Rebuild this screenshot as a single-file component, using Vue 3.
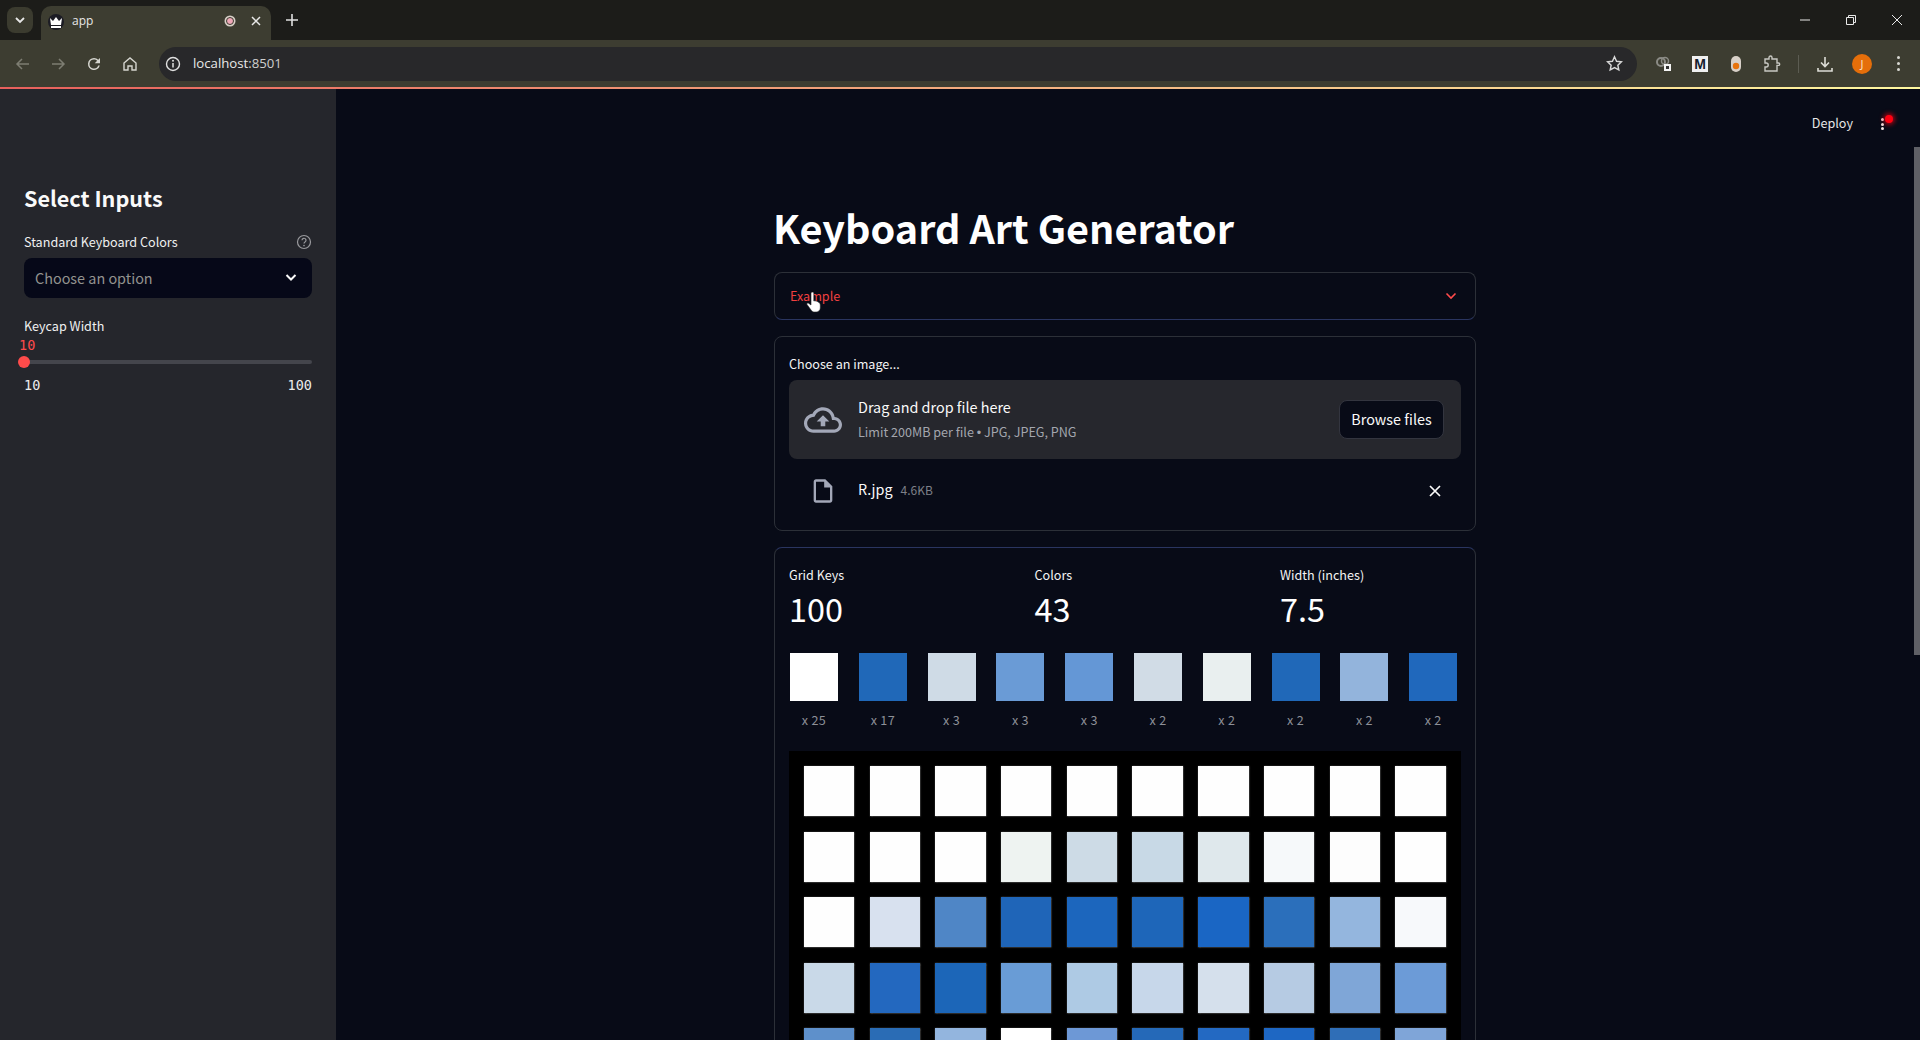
<template>
  <div class="page">
    <!-- browser window -->
    <div class="tabstrip">
      <div class="tab-menu">
        <svg width="14" height="14" viewBox="0 0 14 14"><path d="M3 5l4 4 4-4" fill="none" stroke="#e8e8e8" stroke-width="1.8" /></svg>
      </div>
      <div class="tab">
        <span class="favicon">
          <svg width="14" height="11" viewBox="0 0 14 11"><path d="M1 1l3 3 3-4 3 4 3-3-1 7H2zM2 9h10v2H2z" fill="#fff" /></svg>
        </span>
        <span class="tab-title">app</span>
        <span class="rec"></span>
        <svg class="tab-close" width="12" height="12" viewBox="0 0 12 12"><path d="M2 2l8 8M10 2l-8 8" stroke="#e8e8e8" stroke-width="1.5" /></svg>
      </div>
      <svg class="new-tab" width="14" height="14" viewBox="0 0 14 14"><path d="M7 1v12M1 7h12" stroke="#e0e0e0" stroke-width="1.6" /></svg>
      <div class="win-btns">
        <svg width="12" height="12" viewBox="0 0 12 12"><path d="M1 6h10" stroke="#e8e8e8" /></svg>
        <svg width="12" height="12" viewBox="0 0 12 12"><path d="M1.5 3.5h7v7h-7zM3.5 3.5v-2h7v7h-2" fill="none" stroke="#e8e8e8" /></svg>
        <svg width="12" height="12" viewBox="0 0 12 12"><path d="M1 1l10 10M11 1L1 11" stroke="#e8e8e8" /></svg>
      </div>
    </div>
    <div class="toolbar">
      <div class="nav-btns">
        <svg width="16" height="16" viewBox="0 0 16 16"><path d="M14 8H2M7 3L2 8l5 5" fill="none" stroke="#7d7d72" stroke-width="1.5" /></svg>
        <svg width="16" height="16" viewBox="0 0 16 16"><path d="M2 8h12M9 3l5 5-5 5" fill="none" stroke="#7d7d72" stroke-width="1.5" /></svg>
        <svg width="18" height="18" viewBox="0 0 24 24"><path d="M17.65 6.35A7.95 7.95 0 0 0 12 4a8 8 0 1 0 7.73 10h-2.08A6 6 0 1 1 12 6c1.66 0 3.14.69 4.22 1.78L13 11h7V4l-2.35 2.35z" fill="#d6d6d0" /></svg>
        <svg width="16" height="16" viewBox="0 0 16 16"><path d="M2 7l6-5 6 5v7h-4v-4H6v4H2z" fill="none" stroke="#d6d6d0" stroke-width="1.4" /></svg>
      </div>
      <div class="address">
        <svg width="16" height="16" viewBox="0 0 16 16"><circle cx="8" cy="8" r="6.5" fill="none" stroke="#e0e0e0" stroke-width="1.4" /><path d="M8 7v4.5" stroke="#e0e0e0" stroke-width="1.5" /><circle cx="8" cy="4.8" r="1" fill="#e0e0e0" /></svg>
        <span class="url">localhost<span class="url-port">:8501</span></span>
        <svg class="star" width="17" height="17" viewBox="0 0 24 24"><path d="M12 2.5l2.9 6.3 6.9.8-5.1 4.7 1.4 6.8-6.1-3.4-6.1 3.4 1.4-6.8-5.1-4.7 6.9-.8z" fill="none" stroke="#d8d8d8" stroke-width="2" /></svg>
      </div>
      <div class="ext-btns">
        <span class="ext">
          <svg width="18" height="18" viewBox="0 0 18 18"><circle cx="6" cy="7" r="4" fill="none" stroke="#8b8b85" stroke-width="2" /><circle cx="10" cy="6" r="3.5" fill="none" stroke="#8b8b85" stroke-width="1.5" /><rect x="9" y="9" width="7" height="7" fill="#f4f4f4" /><rect x="11" y="11" width="3" height="3" fill="#333" /></svg>
        </span>
        <span class="ext ext-m">M</span>
        <span class="ext">
          <svg width="14" height="18" viewBox="0 0 14 18"><rect x="2" y="1" width="10" height="16" rx="5" fill="#d8d0c8" /><circle cx="7" cy="11" r="3.2" fill="#e8730c" /></svg>
        </span>
        <span class="ext">
          <svg width="18" height="18" viewBox="0 0 18 18"><path d="M2 4h4V2.5a1.5 1.5 0 0 1 3 0V4h5v4h1.5a1.2 1.2 0 0 1 0 2.4H14V16H2v-4h1.2a2 2 0 0 0 0-4H2z" fill="none" stroke="#c8c8c2" stroke-width="1.4" /></svg>
        </span>
        <span class="sep"></span>
        <span class="ext">
          <svg width="18" height="18" viewBox="0 0 18 18"><path d="M9 2v9M5 7.5l4 4 4-4M2 13v3h14v-3" fill="none" stroke="#dcdcd6" stroke-width="1.6" /></svg>
        </span>
        <span class="avatar">J</span>
        <span class="dots"><i></i><i></i><i></i></span>
      </div>
    </div>
    <div class="deco-line"></div>

    <!-- streamlit app -->
    <div class="app">
      <aside class="sidebar">
        <h2>Select Inputs</h2>
        <div class="field-label">
          <span>Standard Keyboard Colors</span>
          <svg width="16" height="16" viewBox="0 0 16 16"><circle cx="8" cy="8" r="6.5" fill="none" stroke="#9a9a9e" stroke-width="1.2" /><path d="M6 6.3a2 2 0 1 1 3 1.7c-.7.4-1 .8-1 1.6" fill="none" stroke="#9a9a9e" stroke-width="1.2" /><circle cx="8" cy="11.6" r=".8" fill="#9a9a9e" /></svg>
        </div>
        <div class="select">
          <span>Choose an option</span>
          <svg width="14" height="14" viewBox="0 0 14 14"><path d="M2.5 5l4.5 4.5L11.5 5" fill="none" stroke="#fafafa" stroke-width="2" /></svg>
        </div>
        <div class="field-label slider-label">Keycap Width</div>
        <div class="slider-value">10</div>
        <div class="slider-track"><span class="slider-thumb"></span></div>
        <div class="slider-ticks"><span>10</span><span>100</span></div>
      </aside>

      <main class="main">
        <div class="topbar">
          <span>Deploy</span>
          <span class="menu-dots"><i></i><i></i><i></i></span>
          <span class="rec-dot"></span>
        </div>

        <div class="content">
          <h1>Keyboard Art Generator</h1>

          <div class="expander">
            <span class="expander-title">Example</span>
            <svg width="14" height="14" viewBox="0 0 14 14"><path d="M2.5 4.5L7 9l4.5-4.5" fill="none" stroke="#ff4b4b" stroke-width="1.6" /></svg>
            <svg class="hand" width="16" height="22" viewBox="0 0 16 22"><path d="M5 1.5a1.4 1.4 0 0 1 2.8 0V9l1-.2 1.5.3 1.5.6 1.5 1c.7.6 1 1.3 1 2.3v3c0 2.2-1.8 4-4 4H8.5c-1.5 0-2.5-.7-3.3-1.8L1 12.5c-.6-.9.5-2 1.500-1.300L5 13z" fill="#fff" stroke="#222" stroke-width=".6" /></svg>
          </div>

          <section class="box upload-box">
            <div class="box-label">Choose an image...</div>
            <div class="dropzone">
              <svg class="cloud" width="38" height="38" viewBox="0 0 24 24"><path d="M19.35 10.04C18.67 6.59 15.64 4 12 4 9.11 4 6.6 5.64 5.35 8.04 2.34 8.36 0 10.91 0 14c0 3.31 2.69 6 6 6h13c2.76 0 5-2.24 5-5 0-2.64-2.05-4.78-4.65-4.96zM19 18H6c-2.21 0-4-1.79-4-4 0-2.05 1.53-3.76 3.56-3.97l1.07-.11.5-.95C8.08 7.14 9.94 6 12 6c2.62 0 4.88 1.86 5.39 4.43l.3 1.5 1.53.11c1.56.1 2.78 1.41 2.78 2.96 0 1.65-1.35 3-3 3zM8 13h2.55v3h2.9v-3H16l-4-4z" fill="#a3a8b8" /></svg>
              <div class="drop-text">
                <div class="drop-title">Drag and drop file here</div>
                <div class="drop-limit">Limit 200MB per file <span class="bullet">•</span> JPG, JPEG, PNG</div>
              </div>
              <button type="button" class="browse">Browse files</button>
            </div>
            <div class="file-row">
              <svg class="file-icon" width="28" height="28" viewBox="0 0 24 24"><path d="M14 2H6c-1.1 0-1.99.9-1.99 2L4 20c0 1.1.89 2 1.99 2H18c1.1 0 2-.9 2-2V8l-6-6zM6 20V4h7v5h5v11H6z" fill="#a3a8b8" /></svg>
              <span class="file-name">R.jpg</span>
              <span class="file-size">4.6KB</span>
              <svg class="file-x" width="14" height="14" viewBox="0 0 14 14"><path d="M2 2l10 10M12 2L2 12" stroke="#fafafa" stroke-width="1.7" /></svg>
            </div>
          </section>

          <section class="box result-box">
            <div class="metrics">
              <div v-for="m in metrics" :key="m.label">
                <div class="box-label">{{ m.label }}</div>
                <div class="metric-value">{{ m.value }}</div>
              </div>
            </div>

            <div class="swatches">
              <div v-for="(s, i) in swatches" :key="i" class="swatch">
                <div class="swatch-color" :style="{ background: s.color }"></div>
                <div class="swatch-count">x {{ s.count }}</div>
              </div>
            </div>

            <div class="keyboard">
              <div v-for="(c, i) in keys" :key="i" class="key" :style="{ background: c }"></div>
            </div>
          </section>
        </div>
      </main>
      <div class="scrollbar"></div>
    </div>
  </div>
</template>

<script setup>
const metrics = [
  { label: 'Grid Keys', value: '100' },
  { label: 'Colors', value: '43' },
  { label: 'Width (inches)', value: '7.5' },
];

const swatches = [
  { color: '#ffffff', count: 25 },
  { color: '#2068b8', count: 17 },
  { color: '#cfdbe6', count: 3 },
  { color: '#6a9bd6', count: 3 },
  { color: '#6497d6', count: 3 },
  { color: '#d1dce6', count: 2 },
  { color: '#e9efef', count: 2 },
  { color: '#2068b8', count: 2 },
  { color: '#93b4dc', count: 2 },
  { color: '#2068bc', count: 2 },
];

// keycap colours, row by row
const keys = [
  '#fefefe', '#fefefe', '#fefefe', '#fefefe', '#fefefe', '#fefefe', '#fefefe', '#fefefe', '#fefefe', '#fefefe',
  '#fefefe', '#fefefe', '#fefefe', '#eef3f1', '#cddbe6', '#c8d9e6', '#dfe8ec', '#f6f9fa', '#fdfdfd', '#fefefe',
  '#fefefe', '#d8e1ef', '#4f86c6', '#1f65b8', '#1c66bd', '#1e66b9', '#1a66c4', '#2b6fbb', '#94b6de', '#f7f9fb',
  '#c9d9e8', '#2368bf', '#1c66b8', '#699cd6', '#aecae4', '#c7d7ea', '#d5e0ec', '#b6cbe3', '#7fa6d7', '#6c9bd7',
  '#5e90cb', '#2a6cb5', '#93b5de', '#ffffff', '#6d98d6', '#2569b8', '#2369c2', '#1e67c3', '#2f6eb7', '#7fa5d8',
];
</script>

<style>
html, body {
  margin: 0;
  background: #080b17;
}
</style>

<style scoped>
.page {
  width: 1920px;
  height: 1040px;
  overflow: hidden;
  display: flex;
  flex-direction: column;
  font-family: "Noto Sans CJK SC", "Noto Sans", sans-serif;
  color: #fafafa;
}

/* browser */
.tabstrip {
  height: 40px;
  flex: none;
  display: flex;
  align-items: flex-end;
  background: #1c1c19;
}
.tab-menu {
  width: 26px;
  height: 26px;
  margin: 0 7px 7px 7px;
  border-radius: 8px;
  background: #3b3b2f;
  display: flex;
  align-items: center;
  justify-content: center;
}
.tab {
  width: 230px;
  height: 34px;
  margin-left: 1px;
  padding: 0 9px 0 7px;
  box-sizing: border-box;
  border-radius: 10px 10px 0 0;
  background: #3d3d31;
  display: flex;
  align-items: center;
  font-family: "Open Sans", sans-serif;
  font-size: 12px;
}
.favicon {
  width: 16px;
  height: 16px;
  border-radius: 50%;
  background: #1c1c24;
  display: flex;
  align-items: center;
  justify-content: center;
  position: relative;
  top: -1px;
}
.tab-title {
  margin-left: 8px;
  color: #e8e8e8;
  position: relative;
  top: -3px;
}
.rec {
  width: 6px;
  height: 6px;
  margin-left: auto;
  margin-right: 16px;
  position: relative;
  top: -2px;
  border-radius: 50%;
  background: #f0a8b8;
  border: 1.5px solid #3d3d31;
  box-shadow: 0 0 0 1.5px #d8d0c8;
}
.tab-close {
  position: relative;
  top: -2px;
}
.new-tab {
  align-self: center;
  margin-left: 14px;
}
.win-btns {
  margin-left: auto;
  align-self: center;
  display: flex;
  gap: 34px;
  padding-right: 17px;
}
.toolbar {
  height: 47px;
  flex: none;
  display: flex;
  align-items: center;
  background: #3d3d31;
}
.nav-btns {
  width: 159px;
  padding-left: 15px;
  box-sizing: border-box;
  display: flex;
  align-items: center;
  gap: 19px;
  flex: none;
}
.address {
  width: 1478px;
  height: 34px;
  flex: none;
  border-radius: 17px;
  background: #28282a;
  display: flex;
  align-items: center;
  padding: 0 14px 0 6px;
  box-sizing: border-box;
}
.url {
  margin-left: 12px;
  font-family: "Open Sans", sans-serif;
  font-size: 13.2px;
  line-height: 18px;
  position: relative;
  top: -1px;
  color: #e8e8e8;
}
.url-port {
  color: #cfcfcf;
}
.star {
  margin-left: auto;
}
.ext-btns {
  display: flex;
  align-items: center;
  padding-left: 9px;
}
.ext {
  width: 36px;
  display: flex;
  justify-content: center;
}
.ext-m {
  width: 16px;
  height: 16px;
  margin: 0 10px;
  justify-content: center;
  align-items: center;
  background: #f0f0f0;
  color: #14202e;
  font-family: "Liberation Sans", sans-serif;
  font-weight: 700;
  font-size: 14px;
  line-height: 16px;
}
.sep {
  width: 1px;
  height: 18px;
  margin: 0 8px;
  background: #5c5c52;
}
.avatar {
  width: 20px;
  height: 20px;
  margin-left: 9px;
  border-radius: 50%;
  background: #e56e0a;
  color: #fbe3c8;
  font-family: "Open Sans", sans-serif;
  font-size: 11px;
  line-height: 20px;
  text-align: center;
}
.dots {
  display: flex;
  flex-direction: column;
  gap: 3px;
  margin-left: 25px;
}
.dots i {
  width: 3px;
  height: 3px;
  border-radius: 50%;
  background: #d8d8d2;
}
.deco-line {
  height: 2px;
  flex: none;
  background: linear-gradient(90deg, #e8605c, #fff8a0);
}

/* app */
.app {
  flex: 1;
  min-height: 0;
  display: flex;
  position: relative;
  background: #080b17;
}
.sidebar {
  width: 336px;
  flex: none;
  box-sizing: border-box;
  padding: 93px 24px 0;
  background: #25262c;
}
.sidebar h2 {
  margin: 0 0 18px;
  font-size: 21.6px;
  line-height: 32px;
  font-weight: 600;
}
.field-label {
  display: flex;
  justify-content: space-between;
  align-items: center;
  height: 20px;
  font-size: 12.6px;
  line-height: 20px;
  color: #f0f0f0;
}
.select {
  height: 40px;
  margin-top: 6px;
  padding: 0 14px 2px 11px;
  box-sizing: border-box;
  border-radius: 8px;
  background: #060818;
  display: flex;
  align-items: center;
  justify-content: space-between;
  font-size: 14.4px;
  color: #93938f;
}
.slider-label {
  margin-top: 18px;
}
.slider-value {
  margin: -1px 0 0 -5px;
  height: 20px;
  font-family: "DejaVu Sans Mono", monospace;
  font-size: 13.5px;
  line-height: 20px;
  color: #ff4b4b;
}
.slider-track {
  position: relative;
  height: 4px;
  margin-top: 5px;
  border-radius: 2px;
  background: #44454c;
}
.slider-thumb {
  position: absolute;
  left: -6px;
  top: -4px;
  width: 12px;
  height: 12px;
  border-radius: 50%;
  background: #ff4b4b;
}
.slider-ticks {
  display: flex;
  justify-content: space-between;
  margin-top: 11px;
  font-family: "DejaVu Sans Mono", monospace;
  font-size: 13.5px;
  line-height: 20px;
  color: #ececec;
}

.main {
  flex: 1;
  position: relative;
  min-width: 0;
  padding-right: 6px;
}
.topbar {
  position: absolute;
  top: 24px;
  right: 36px;
  display: flex;
  align-items: center;
  gap: 28px;
  font-size: 12.6px;
  line-height: 20px;
  color: #e6e6e6;
}
.menu-dots {
  display: flex;
  flex-direction: column;
  gap: 1.5px;
  position: relative;
  top: 1px;
}
.menu-dots i {
  width: 3px;
  height: 3px;
  border-radius: 50%;
  background: #f0e0e0;
}
.rec-dot {
  position: absolute;
  right: -9px;
  top: 2px;
  width: 8px;
  height: 8px;
  border-radius: 50%;
  background: #ff0010;
  box-shadow: 0 0 4px 2px rgba(255, 0, 16, 0.6);
}
.content {
  width: 702px;
  margin: 0 auto;
  padding-top: 112px;
}
h1 {
  margin: 0 0 19px -1px;
  font-size: 39.6px;
  line-height: 52px;
  font-weight: 700;
  color: #fff;
}
.expander {
  position: relative;
  height: 48px;
  box-sizing: border-box;
  padding: 0 17px 0 15px;
  border: 1px solid #2c3038;
  border-bottom-color: #2a3560;
  border-radius: 8px;
  display: flex;
  align-items: center;
  justify-content: space-between;
  font-size: 12.6px;
  color: #f04040;
}
.expander-title {
  position: relative;
  top: -1px;
}
.hand {
  position: absolute;
  left: 31px;
  top: 19px;
}
.box {
  margin-top: 16px;
  padding: 17px 14px 0;
  border: 1px solid #2c3038;
  border-radius: 8px;
}
.upload-box {
  height: 195px;
  box-sizing: border-box;
}
.box-label {
  font-size: 12.6px;
  line-height: 19px;
  padding-bottom: 1px;
  color: #f4f4f4;
}
.dropzone {
  height: 79px;
  margin-top: 6px;
  padding: 0 17px 0 15px;
  border-radius: 8px;
  background: #26272d;
  display: flex;
  align-items: center;
}
.cloud {
  flex: none;
}
.drop-text {
  margin-left: 16px;
}
.drop-title {
  font-size: 14.4px;
  line-height: 23px;
  position: relative;
  top: -1px;
}
.drop-limit {
  margin-top: 3px;
  font-size: 12.6px;
  line-height: 20px;
  color: #a3a6ae;
}
.bullet {
  font-family: "Liberation Sans", sans-serif;
}
.browse {
  margin-left: auto;
  width: 105px;
  height: 39px;
  padding: 0 0 2px;
  border: 1px solid #33353f;
  border-radius: 8px;
  background: #080b17;
  color: #fafafa;
  font-family: inherit;
  font-size: 14.4px;
}
.file-row {
  height: 42px;
  margin-top: 11px;
  padding: 0 19px 0 20px;
  display: flex;
  align-items: center;
}
.file-name {
  margin-left: 21px;
  font-size: 14.4px;
  line-height: 20px;
  position: relative;
  top: -2px;
}
.file-size {
  margin-left: 8px;
  font-size: 12px;
  line-height: 20px;
  position: relative;
  top: -1px;
  color: #7d8088;
}
.file-x {
  margin-left: auto;
}
.result-box {
  border-top-color: #2a3560;
  height: 600px;
}
.metrics {
  display: grid;
  grid-template-columns: repeat(3, 245.5px);
}
.metric-value {
  margin-top: 1px;
  font-size: 32.4px;
  line-height: 44px;
  color: #fff;
}
.swatches {
  margin-top: 23px;
  display: grid;
  grid-template-columns: repeat(10, 52.8px);
  column-gap: 16px;
}
.swatch {
  width: 48px;
  margin-left: 1px;
}
.swatch-color {
  height: 48px;
}
.swatch-count {
  margin-top: 9px;
  font-size: 12.6px;
  line-height: 20px;
  text-align: center;
  color: #8d9097;
  letter-spacing: 0.3px;
}
.keyboard {
  margin-top: 21px;
  padding: 15px 15px;
  background: #000;
  display: grid;
  grid-template-columns: repeat(10, 50.4px);
  grid-auto-rows: 50px;
  gap: 15.5px 15.3px;
}
.key {
  box-shadow: 0 0 1.5px 0.5px #8a8a8a;
}
.scrollbar {
  position: absolute;
  right: 0;
  top: 58px;
  width: 6px;
  height: 508px;
  background: #5f6066;
}
</style>
